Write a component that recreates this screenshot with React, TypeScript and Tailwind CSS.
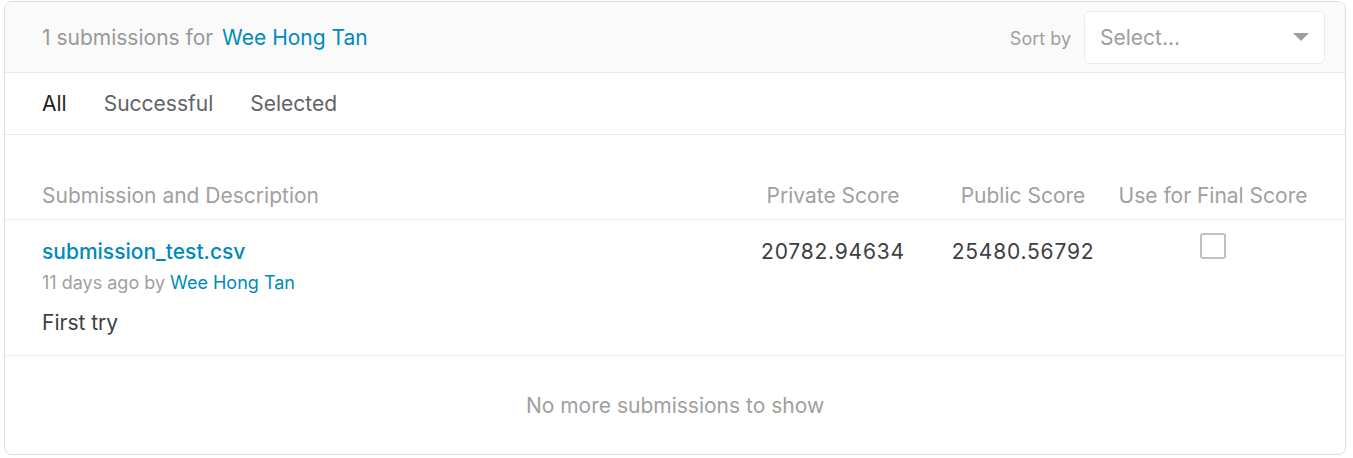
import React from "react";

export default function App() {
  return (
    <div className="w-[1353px] h-[458px] bg-white pt-[1px] pl-[4px]" style={{ fontFamily: "Inter, 'Noto Sans', sans-serif" }}>
      <div className="w-[1342px] h-[454px] border border-[#dadce0] rounded-[8px] overflow-hidden flex flex-col">
        <div className="h-[71px] bg-[#fafafa] border-b border-[#e8e8e8] flex items-center justify-between pl-[37px] pr-[20px]">
          <div className="text-[21px] text-[#999999] pt-[2px]">
            1 submissions for <span className="text-[#008abc] ml-[3px]">Wee Hong Tan</span>
          </div>
          <div className="flex items-center gap-[13px]">
            <span className="text-[18px] text-[#a0a0a0] pt-[2px]">Sort by</span>
            <div className="w-[241px] h-[53px] bg-white border border-[#ececec] rounded-[6px] flex items-center justify-between pl-[15px] pr-[15px]">
              <span className="text-[21px] text-[#9e9e9e] pt-[2px]">Select...</span>
              <svg width="16" height="9" viewBox="0 0 16 9"><path d="M0 0 L16 0 L8 8 Z" fill="#9e9e9e" /></svg>
            </div>
          </div>
        </div>
        <div className="h-[62px] border-b border-[#e8e8e8] flex items-center pl-[37px] gap-[37px] text-[21px]">
          <span className="text-[#202124]">All</span>
          <span className="text-[#5f6368]">Successful</span>
          <span className="text-[#5f6368]">Selected</span>
        </div>
        <div className="h-[85px] border-b border-[#ececec] flex items-end pb-[8px] pl-[37px] pr-[37px] text-[21px] text-[#a0a0a0]">
          <div className="flex-1">Submission and Description</div>
          <div className="w-[190px] text-center">Private Score</div>
          <div className="w-[190px] text-center">Public Score</div>
          <div className="w-[190px] text-center">Use for Final Score</div>
        </div>
        <div className="h-[136px] border-b border-[#ececec] flex pl-[37px] pr-[37px] pt-[18px]">
          <div className="flex-1 flex flex-col">
            <span className="text-[21px] font-medium text-[#008abc] leading-[28px]">submission_test.csv</span>
            <span className="text-[18px] text-[#a0a0a0] mt-[5px] leading-[24px]">11 days ago by <span className="text-[#008abc]">Wee Hong Tan</span></span>
            <span className="text-[21px] text-[#3c4043] mt-[14px] leading-[28px]">First try</span>
          </div>
          <div className="w-[190px] text-center text-[21px] text-[#3c4043] leading-[28px] tracking-[0.8px]">20782.94634</div>
          <div className="w-[190px] text-center text-[21px] text-[#3c4043] leading-[28px] tracking-[0.8px]">25480.56792</div>
          <div className="w-[190px] flex justify-center">
            <div className="w-[26px] h-[26px] border-2 border-[#bdc1c6] rounded-[3px] -mt-[5px]" />
          </div>
        </div>
        <div className="flex-1 flex items-center justify-center text-[21px] text-[#a0a0a0] pt-[2px]">
          No more submissions to show
        </div>
      </div>
    </div>
  );
}
